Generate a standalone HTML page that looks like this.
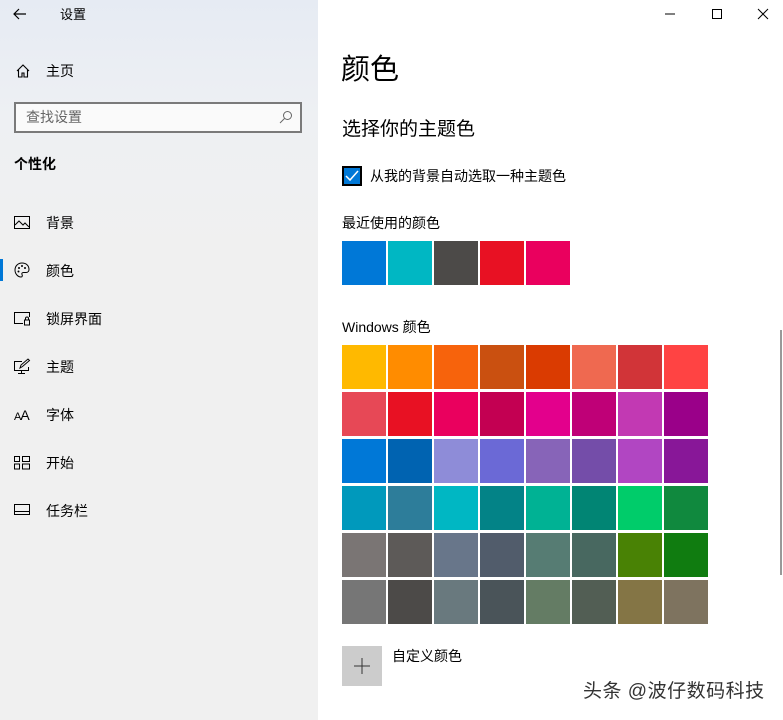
<!DOCTYPE html>
<html><head><meta charset="utf-8"><style>
*{margin:0;padding:0;box-sizing:border-box}
body{width:783px;height:720px;position:relative;overflow:hidden;background:#fff;font-family:"Liberation Sans","Noto Sans CJK SC",sans-serif;color:#000}
.side{position:absolute;left:0;top:0;width:318px;height:720px;background:linear-gradient(180deg,#e6ebf3 0%,#eef0f3 120px,#f0f0f0 260px,#f0f0f0 100%)}
.a{position:absolute;font-size:14px;line-height:16px}
.sw{position:absolute;width:44px;height:44px}
svg{position:absolute}
</style></head><body>
<div class="side">
<svg style="left:12px;top:6px" width="16" height="16" viewBox="0 0 16 16"><path d="M14 8H2M7 3L2 8l5 5" fill="none" stroke="#000" stroke-width="1.2"/></svg>
<div class="a" style="left:60px;top:7px;font-size:13px">设置</div>
<svg style="left:15px;top:63px" width="16" height="16" viewBox="0 0 16 16"><path d="M2 8L8 2l6 6M3.5 6.5V14h3.5v-4h2v4h3.5V6.5" fill="none" stroke="#000" stroke-width="1.1"/></svg>
<div class="a" style="left:46px;top:63px">主页</div>
<div style="position:absolute;left:14px;top:102px;width:288px;height:31px;border:2px solid #7a7a7a;background:#fafafa"></div>
<div class="a" style="left:26px;top:109px;color:#666">查找设置</div>
<svg style="left:279px;top:110px" width="14" height="14" viewBox="0 0 14 14"><circle cx="8.5" cy="5.5" r="4" fill="none" stroke="#666" stroke-width="1"/><path d="M5.5 8.5L1 13" stroke="#666" stroke-width="1"/></svg>
<div class="a" style="left:14px;top:156px;font-weight:bold">个性化</div>
<svg style="left:14px;top:216px" width="17" height="14" viewBox="0 0 17 14"><rect x="0.5" y="0.5" width="15" height="12" fill="none" stroke="#000"/><path d="M1 9l4-4 4 4 2-2 4 4" fill="none" stroke="#000"/></svg>
<div class="a" style="left:46px;top:215px">背景</div>
<div style="position:absolute;left:0;top:259px;width:3px;height:22px;background:#0078d7"></div>
<svg style="left:14px;top:262px" width="16" height="16" viewBox="0 0 16 16"><path d="M8 1C4 1 1 4 1 8s3 7 6 7c1.5 0 1.5-1.5 1-2.5s0-2 1.5-2H12c2 0 3-1.5 3-3C15 3.5 12 1 8 1z" fill="none" stroke="#000"/><circle cx="5" cy="6" r="1"/><circle cx="8" cy="4" r="1"/><circle cx="11" cy="6" r="1"/><circle cx="4.5" cy="9.5" r="1"/></svg>
<div class="a" style="left:46px;top:263px">颜色</div>
<svg style="left:14px;top:312px" width="17" height="14" viewBox="0 0 17 14"><path d="M9 11.5H0.5V0.5h15V5" fill="none" stroke="#000"/><rect x="10.5" y="8" width="5" height="5" fill="none" stroke="#000"/><path d="M11.5 8V6.5a1.5 1.5 0 013 0V8" fill="none" stroke="#000"/></svg>
<div class="a" style="left:46px;top:311px">锁屏界面</div>
<svg style="left:14px;top:358px" width="17" height="16" viewBox="0 0 17 16"><path d="M8 3.5H0.5v9h14V9M7.5 12.5v3M4 15.5h7M6 10l1-3 7-6 1.5 1.5-7 6z" fill="none" stroke="#000"/></svg>
<div class="a" style="left:46px;top:359px">主题</div>
<div class="a" style="left:14px;top:407px;font-size:11px;letter-spacing:-1px">A<span style="font-size:14px">A</span></div>
<div class="a" style="left:46px;top:407px">字体</div>
<svg style="left:14px;top:456px" width="16" height="14" viewBox="0 0 16 14"><rect x="0.5" y="0.5" width="5" height="5" fill="none" stroke="#000"/><rect x="8.5" y="0.5" width="7" height="5" fill="none" stroke="#000"/><rect x="0.5" y="8" width="5" height="5" fill="none" stroke="#000"/><rect x="8.5" y="8" width="7" height="5" fill="none" stroke="#000"/></svg>
<div class="a" style="left:46px;top:455px">开始</div>
<svg style="left:14px;top:504px" width="17" height="12" viewBox="0 0 17 12"><rect x="0.5" y="0.5" width="15" height="10" fill="none" stroke="#000"/><path d="M1 7.5h14" stroke="#000"/></svg>
<div class="a" style="left:46px;top:503px">任务栏</div>
</div>
<svg style="left:664px;top:8px" width="110" height="12" viewBox="0 0 110 12"><path d="M1 6h10" stroke="#000"/><rect x="48.5" y="1.5" width="9" height="9" fill="none" stroke="#000"/><path d="M94 1l10 10M104 1L94 11" stroke="#000"/></svg>
<div class="a" style="left:341px;top:53px;font-size:29px;line-height:34px">颜色</div>
<div class="a" style="left:342px;top:119px;font-size:19px;line-height:22px">选择你的主题色</div>
<div style="position:absolute;left:342px;top:166px;width:20px;height:20px;background:#0078d7;border:2px solid #000"></div>
<svg style="left:344px;top:168px" width="16" height="16" viewBox="0 0 16 16"><path d="M2 8l4 4 8-9" fill="none" stroke="#fff" stroke-width="1.5"/></svg>
<div class="a" style="left:370px;top:168px">从我的背景自动选取一种主题色</div>
<div class="a" style="left:342px;top:215px">最近使用的颜色</div>
<div class="sw" style="left:342px;top:241px;background:#0078D7"></div>
<div class="sw" style="left:388px;top:241px;background:#00B7C3"></div>
<div class="sw" style="left:434px;top:241px;background:#4C4A48"></div>
<div class="sw" style="left:480px;top:241px;background:#E81123"></div>
<div class="sw" style="left:526px;top:241px;background:#EA005E"></div>
<div class="a" style="left:342px;top:319px">Windows 颜色</div>
<div id="g"></div>
<div style="position:absolute;left:342px;top:646px;width:40px;height:40px;background:#ccc"></div>
<svg style="left:352px;top:656px" width="20" height="20" viewBox="0 0 20 20"><path d="M10 2v16M2 10h16" stroke="#333" stroke-width="1"/></svg>
<div class="a" style="left:392px;top:648px">自定义颜色</div>
<div style="position:absolute;left:780px;top:330px;width:2px;height:245px;background:#999"></div>
<div class="a" style="left:583px;top:681px;font-size:19px;line-height:22px;letter-spacing:0.5px;color:#333;text-shadow:1px 1px 1px #fff">头条 @波仔数码科技</div>
<script>
var c=["FFB900","FF8C00","F7630C","CA5010","DA3B01","EF6950","D13438","FF4343",
"E74856","E81123","EA005E","C30052","E3008C","BF0077","C239B3","9A0089",
"0078D7","0063B1","8E8CD8","6B69D6","8764B8","744DA9","B146C2","881798",
"0099BC","2D7D9A","00B7C3","038387","00B294","018574","00CC6A","10893E",
"7A7574","5D5A58","68768A","515C6B","567C73","486860","498205","107C10",
"767676","4C4A48","69797E","4A5459","647C64","525E54","847545","7E735F"];
var h="";for(var i=0;i<48;i++){h+='<div class="sw" style="left:'+(342+(i%8)*46)+'px;top:'+(345+Math.floor(i/8)*47)+'px;background:#'+c[i]+'"></div>';}
document.getElementById("g").innerHTML=h;
</script>
</body></html>
